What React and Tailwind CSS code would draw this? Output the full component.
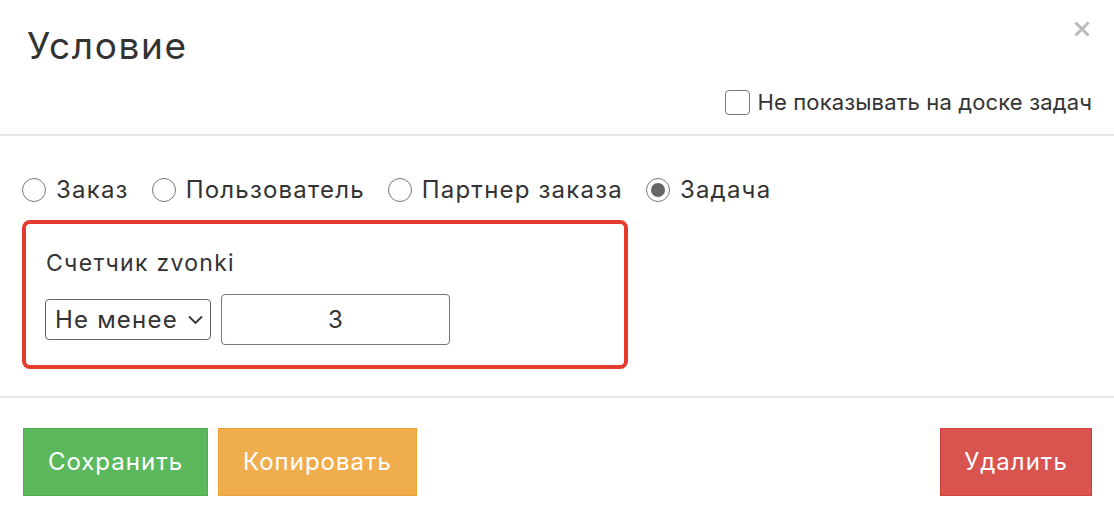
import React from "react";

function Radio({ label, checked }) {
  return (
    <label className="flex items-center gap-[10px]">
      <span className="w-[24px] h-[24px] rounded-full border-[1.5px] border-[#777] flex items-center justify-center">
        {checked && <span className="w-[14px] h-[14px] rounded-full bg-[#666]" />}
      </span>
      <span>{label}</span>
    </label>
  );
}

export default function App() {
  return (
    <div className="w-[1114px] h-[520px] bg-white text-[#333] flex flex-col" style={{ fontFamily: 'Inter, "Open Sans", sans-serif' }}>
      <div className="h-[136px] border-b-2 border-[#e5e5e5] relative px-[27px] pt-[20px]">
        <div className="text-[37px] leading-[52px] tracking-[1.6px]">Условие</div>
        <div className="absolute right-[24px] top-[21px] text-[#bbb]">
          <svg width="16" height="16" viewBox="0 0 16 16">
            <path d="M2.5 2.5 L13.5 13.5 M13.5 2.5 L2.5 13.5" stroke="#bbb" strokeWidth="3" strokeLinecap="square" />
          </svg>
        </div>
        <div className="absolute right-[22px] top-[86px] flex items-center gap-[7px] text-[22px] tracking-[0.15px]">
          <span className="w-[25px] h-[25px] rounded-[4px] border-[1.5px] border-[#777]" />
          <span>Не показывать на доске задач</span>
        </div>
      </div>
      <div className="h-[262px] border-b-2 border-[#e5e5e5] px-[22px] pt-[38px]">
        <div className="flex items-center gap-[23px] text-[24px] leading-[32px] tracking-[1.2px]">
          <Radio label="Заказ" />
          <Radio label="Пользователь" />
          <Radio label="Партнер заказа" />
          <Radio label="Задача" checked />
        </div>
        <div className="mt-[14px] w-[606px] h-[149px] border-[4px] border-[#e53b2f] rounded-[8px] px-[19px] pt-[24px]">
          <div className="text-[23px] leading-[30px] tracking-[1.3px] pl-[1px]">Счетчик zvonki</div>
          <div className="flex items-center gap-[10px] mt-[16px]">
            <div className="w-[166px] h-[41px] border-[1.5px] border-[#666] rounded-[4px] flex items-center pl-[9px] pr-[6px] text-[24px] tracking-[1.2px]">
              <span className="flex-1">Не менее</span>
              <svg width="17" height="11" viewBox="0 0 17 11">
                <path d="M2 2.5 L8.5 9 L15 2.5" stroke="#333" strokeWidth="1.8" fill="none" />
              </svg>
            </div>
            <div className="w-[229px] h-[51px] border-[1.5px] border-[#777] rounded-[4px] flex items-center justify-center text-[24px]">3</div>
          </div>
        </div>
      </div>
      <div className="flex items-start pl-[23px] pr-[22px] pt-[30px] text-[24px] tracking-[1px] text-white">
        <button className="w-[185px] h-[68px] bg-[#5cb85c] border-[1.5px] border-[#4cae4c]">Сохранить</button>
        <button className="ml-[10px] w-[199px] h-[68px] bg-[#f0ad4e] border-[1.5px] border-[#eea236]">Копировать</button>
        <button className="ml-auto w-[152px] h-[68px] bg-[#d9534f] border-[1.5px] border-[#d43f3a]">Удалить</button>
      </div>
    </div>
  );
}
